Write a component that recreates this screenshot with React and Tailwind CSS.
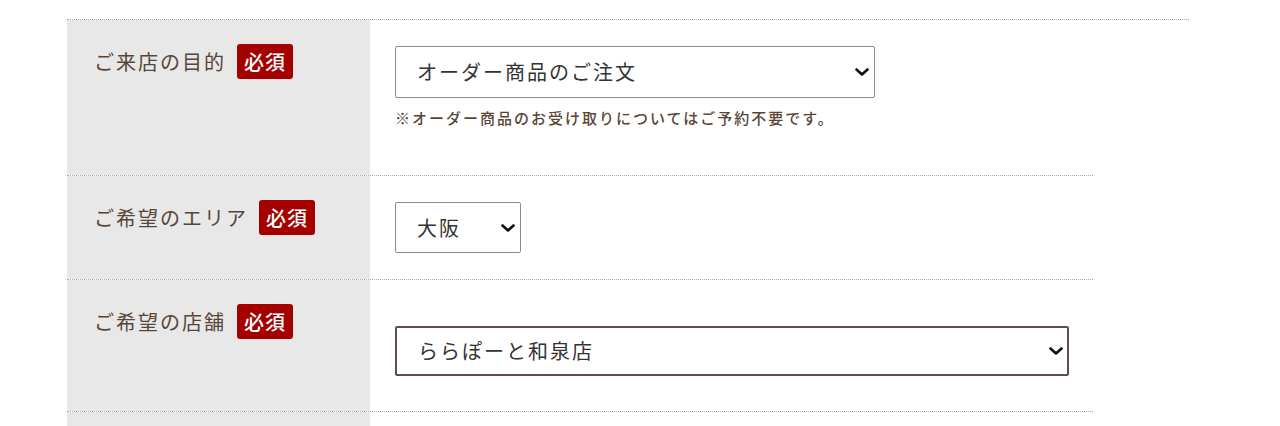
import React from 'react';

const Chevron = ({ className }) => (
  <svg
    viewBox="0 0 14 8"
    className={className}
    fill="none"
    stroke="#111"
    strokeWidth="2.6"
    strokeLinecap="round"
    strokeLinejoin="round"
  >
    <path d="M1.5 1.5 L7 6.5 L12.5 1.5" />
  </svg>
);

const Badge = () => (
  <span className="ml-[11px] flex h-[35px] w-[56px] items-center justify-center rounded-[3px] bg-[#a50000] text-[20px] font-medium leading-none tracking-[1px] text-white">
    必須
  </span>
);

const Label = ({ children }) => (
  <div className="w-[303px] shrink-0 bg-[#e8e8e8] pl-[27px] pt-[24px]">
    <div className="flex items-center">
      <span className="text-[20px] leading-[35px] tracking-[2px] text-[#574538]">{children}</span>
      <Badge />
    </div>
  </div>
);

const SelectBox = ({ value, options, className, border = 'border border-[#8c8c8c]' }) => (
  <div className={`relative ${className}`}>
    <select
      defaultValue={value}
      className={`h-full w-full appearance-none rounded-[2px] bg-white pl-[21px] pr-8 text-[20px] tracking-[2px] text-[#333] outline-none ${border}`}
    >
      {options.map(o => (
        <option key={o}>{o}</option>
      ))}
    </select>
    <Chevron className="pointer-events-none absolute right-[6px] top-1/2 h-[8px] w-[14px] -translate-y-1/2" />
  </div>
);

const App = () => {
  return (
    <div className="min-h-[426px] bg-white pl-[67px] pt-[19px] font-['Noto_Sans_CJK_JP',sans-serif]">
      <div className="w-[1122px] border-t border-dotted border-[#a3abbb]" />

      <div className="w-[1026px]">
        <div className="flex h-[156px] border-b border-dotted border-[#a3abbb]">
          <Label>ご来店の目的</Label>
          <div className="pl-[25px] pt-[26px]">
            <SelectBox
              value="オーダー商品のご注文"
              options={['オーダー商品のご注文', '商品のお受け取り']}
              className="h-[52px] w-[480px]"
            />
            <p className="mt-[10px] text-[15px] font-medium leading-[20px] tracking-[2px] text-[#5a4535]">
              ※オーダー商品のお受け取りについてはご予約不要です。
            </p>
          </div>
        </div>

        <div className="flex h-[104px] border-b border-dotted border-[#a3abbb]">
          <Label>ご希望のエリア</Label>
          <div className="pl-[25px] pt-[26px]">
            <SelectBox value="大阪" options={['大阪', '京都', '兵庫']} className="h-[51px] w-[126px]" />
          </div>
        </div>

        <div className="flex h-[132px] border-b border-dotted border-[#a3abbb]">
          <Label>ご希望の店舗</Label>
          <div className="pl-[25px] pt-[46px]">
            <SelectBox
              value="ららぽーと和泉店"
              options={['ららぽーと和泉店', 'なんば店']}
              className="h-[50px] w-[674px]"
              border="border-2 border-[#5e4d48]"
            />
          </div>
        </div>

        <div className="flex h-[20px]">
          <div className="w-[303px] shrink-0 bg-[#e8e8e8]" />
        </div>
      </div>
    </div>
  );
};

export default App;
